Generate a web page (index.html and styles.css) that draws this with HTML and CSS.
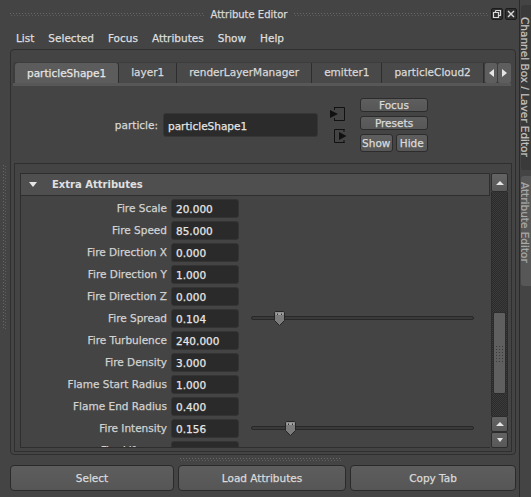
FILE: index.html
```html
<!DOCTYPE html>
<html lang="en">
  <head>
    <meta charset="UTF-8" />
    <title>Attribute Editor</title>
    <link rel="stylesheet" href="styles.css">
  </head>
  <body>
    <div class="app">
      <div class="main">
        <div class="titlebar">
          <span class="grip-h"></span>
          <span class="title">Attribute Editor</span>
          <span class="grip-h"></span>
          <div class="win-btns">
            <span class="win-btn">
              <svg width="10" height="10" viewBox="0 0 10 10">
                <path d="M3.5 1.5 H8.5 V6.5 H6.5 M1.5 3.5 H6.5 V8.5 H1.5 Z M3.5 1.5 V3.5" fill="none" stroke="#d8d8d8" stroke-width="1.2" />
              </svg>
            </span>
            <span class="win-btn">
              <svg width="10" height="10" viewBox="0 0 10 10">
                <path d="M2 2 L8 8 M8 2 L2 8" stroke="#d8d8d8" stroke-width="1.4" />
              </svg>
            </span>
          </div>
        </div>

        <div class="menubar">
          <span>List</span>
          <span>Selected</span>
          <span>Focus</span>
          <span>Attributes</span>
          <span>Show</span>
          <span>Help</span>
        </div>

        <div class="body-row">
          <div class="gutter"><span class="grip-v"></span></div>
          <div class="editor">
            <div class="tabs">
              <span class="tab active">particleShape1</span>
              <span class="tab">layer1</span>
              <span class="tab">renderLayerManager</span>
              <span class="tab">emitter1</span>
              <span class="tab">particleCloud2</span>
              <span class="tab-fill"></span>
              <span class="tab-arrow"><i class="tri-left"></i></span>
              <span class="tab-arrow"><i class="tri-right"></i></span>
            </div>

            <div class="node-row">
              <label class="node-label">particle:</label>
              <div class="node-field">particleShape1</div>
              <svg class="node-icons" width="18" height="38" viewBox="0 0 18 38">
                <path d="M5 1.5 H15.5 V14.5 H5 M5.5 1 V4 M5.5 12 V15" fill="none" stroke="#111" stroke-width="1" />
                <path d="M1 4 L9 8 L1 12 Z" fill="#111" />
                <path d="M15.5 23.5 H5.5 V36.5 H15.5 M15 23 V26 M15 34 V37" fill="none" stroke="#111" stroke-width="1" />
                <path d="M10 26 L17.5 30 L10 34 Z" fill="#111" />
              </svg>
              <div class="node-btns">
                <button class="btn">Focus</button>
                <button class="btn">Presets</button>
                <div class="btn-pair">
                  <button class="btn">Show</button>
                  <button class="btn">Hide</button>
                </div>
              </div>
            </div>

            <div class="section">
              <div class="section-main">
                <div class="section-header">
                  <i class="tri-down"></i>
                  <span>Extra Attributes</span>
                </div>
                <div class="attr-list">
                  <div class="attr-row"><span class="attr-label">Fire Scale</span><span class="attr-field">20.000</span></div>
                  <div class="attr-row"><span class="attr-label">Fire Speed</span><span class="attr-field">85.000</span></div>
                  <div class="attr-row"><span class="attr-label">Fire Direction X</span><span class="attr-field">0.000</span></div>
                  <div class="attr-row"><span class="attr-label">Fire Direction Y</span><span class="attr-field">1.000</span></div>
                  <div class="attr-row"><span class="attr-label">Fire Direction Z</span><span class="attr-field">0.000</span></div>
                  <div class="attr-row">
                    <span class="attr-label">Fire Spread</span><span class="attr-field">0.104</span>
                    <div class="slider">
                      <svg class="handle" style="left: 22px" width="11" height="15" viewBox="0 0 11 15">
                        <path d="M0.5 1.5 L1.5 0.5 H9.5 L10.5 1.5 V9.5 L5.5 14.5 L0.5 9.5 Z" fill="#7c7c7c" stroke="#262626" />
                        <path d="M1.5 1.5 H9.5 V4 H1.5 Z" fill="#a2a2a2" />
                        <rect x="3" y="2.5" width="1" height="1.5" fill="#333" />
                        <rect x="7" y="2.5" width="1" height="1.5" fill="#333" />
                      </svg>
                    </div>
                  </div>
                  <div class="attr-row"><span class="attr-label">Fire Turbulence</span><span class="attr-field">240.000</span></div>
                  <div class="attr-row"><span class="attr-label">Fire Density</span><span class="attr-field">3.000</span></div>
                  <div class="attr-row"><span class="attr-label">Flame Start Radius</span><span class="attr-field">1.000</span></div>
                  <div class="attr-row"><span class="attr-label">Flame End Radius</span><span class="attr-field">0.400</span></div>
                  <div class="attr-row">
                    <span class="attr-label">Fire Intensity</span><span class="attr-field">0.156</span>
                    <div class="slider">
                      <svg class="handle" style="left: 33px" width="11" height="15" viewBox="0 0 11 15">
                        <path d="M0.5 1.5 L1.5 0.5 H9.5 L10.5 1.5 V9.5 L5.5 14.5 L0.5 9.5 Z" fill="#7c7c7c" stroke="#262626" />
                        <path d="M1.5 1.5 H9.5 V4 H1.5 Z" fill="#a2a2a2" />
                        <rect x="3" y="2.5" width="1" height="1.5" fill="#333" />
                        <rect x="7" y="2.5" width="1" height="1.5" fill="#333" />
                      </svg>
                    </div>
                  </div>
                  <div class="attr-row"><span class="attr-label">Fire Lifespan</span><span class="attr-field">0.300</span></div>
                </div>
              </div>

              <div class="scrollbar">
                <span class="sb-btn"><i class="tri-up"></i></span>
                <div class="sb-track">
                  <span class="sb-thumb"><i class="sb-dots"></i></span>
                </div>
                <span class="sb-btn small"><i class="tri-up"></i></span>
                <span class="sb-btn small"><i class="tri-down small"></i></span>
              </div>
            </div>
          </div>
        </div>

        <div class="bottom-grip"><span class="grip-h"></span></div>

        <div class="actions">
          <button class="btn big">Select</button>
          <button class="btn big">Load Attributes</button>
          <button class="btn big">Copy Tab</button>
        </div>
      </div>

      <div class="side">
        <div class="side-tab dark">Channel Box / Layer Editor</div>
        <div class="side-tab light">Attribute Editor</div>
      </div>
    </div>
  </body>
</html>
```

FILE: styles.css
```css
* {
  margin: 0;
  padding: 0;
  box-sizing: border-box;
}

body {
  width: 531px;
  height: 497px;
  overflow: hidden;
  background-color: #444444;
  color: #d6d6d6;
  font-family: "DejaVu Sans", "Liberation Sans", sans-serif;
  font-size: 10.5px;
  -webkit-text-stroke: 0.25px currentColor;
}

.app {
  display: flex;
  height: 497px;
}

.main {
  width: 519px;
  display: flex;
  flex-direction: column;
}

/* title bar */
.titlebar {
  height: 28px;
  display: flex;
  align-items: center;
  padding: 0 2px 0 10px;
}

.grip-h {
  flex: 1;
  height: 3px;
  background-image:
    repeating-linear-gradient(90deg, #686868 0 1px, transparent 1px 3px),
    repeating-linear-gradient(90deg, transparent 0 1px, #5e5e5e 1px 2px, transparent 2px 3px);
  background-size: 100% 1px, 100% 1px;
  background-position: 0 0, 0 2px;
  background-repeat: no-repeat;
}

.title {
  margin: 0 7px;
  font-size: 10px;
  color: #dadada;
}

.win-btns {
  display: flex;
  gap: 2px;
  margin-left: 3px;
}

.win-btn {
  width: 12px;
  height: 12px;
  display: flex;
  align-items: center;
  justify-content: center;
  background-color: #2f2f2f;
  border: 1px solid #1c1c1c;
  border-radius: 2px;
}

/* menu */
.menubar {
  height: 19px;
  display: flex;
  align-items: center;
  gap: 14px;
  padding-left: 16px;
  color: #dedede;
}

/* editor frame */
.body-row {
  display: flex;
  height: 406px;
  margin-top: 2px;
}

.gutter {
  width: 10px;
}

.grip-v {
  display: block;
  width: 3px;
  height: 165px;
  margin: 116px 0 0 3px;
  background-image:
    repeating-linear-gradient(180deg, #686868 0 1px, transparent 1px 3px),
    repeating-linear-gradient(180deg, transparent 0 1px, #5e5e5e 1px 2px, transparent 2px 3px);
  background-size: 1px 100%, 1px 100%;
  background-position: 0 0, 2px 0;
  background-repeat: no-repeat;
}

.editor {
  width: 506px;
  height: 406px;
  border: 1px solid #2f2f2f;
  border-radius: 4px;
}

/* tabs */
.tabs {
  display: flex;
  height: 24px;
  margin: 12px 4px 0 2px;
  padding: 1px 0 0 2px;
  background-color: #3d3d3d;
  border-bottom: 3px solid #575757;
  border-radius: 3px 3px 0 0;
}

.tab {
  padding: 0 12px;
  line-height: 19px;
  background-color: #494949;
  border-right: 1px solid #2e2e2e;
  color: #d8d8d8;
}

.tab.active {
  background-color: #5c5c5c;
  border-radius: 3px 3px 0 0;
  color: #e4e4e4;
  line-height: 20px;
}

.tab-fill {
  flex: 1;
  background-color: #494949;
}

.tab-arrow {
  width: 13px;
  margin-left: 1px;
  display: flex;
  align-items: center;
  justify-content: center;
  background-color: #5e5e5e;
  border-radius: 2px;
}

.tri-left,
.tri-right {
  width: 0;
  height: 0;
  border-top: 4px solid transparent;
  border-bottom: 4px solid transparent;
}

.tri-left {
  border-right: 5px solid #e6e6e6;
}

.tri-right {
  border-left: 5px solid #e6e6e6;
}

/* node row */
.node-row {
  height: 77px;
  display: flex;
  align-items: center;
}

.node-label {
  width: 147px;
  text-align: right;
  color: #d8d8d8;
}

.node-field {
  width: 155px;
  height: 24px;
  margin-left: 5px;
  padding-left: 4px;
  line-height: 24px;
  background-color: #2b2b2b;
  border: 1px solid #363636;
  border-radius: 3px;
  color: #e4e4e4;
}

.node-icons {
  margin-left: 11px;
}

.node-btns {
  margin-left: 13px;
  width: 68px;
  display: flex;
  flex-direction: column;
  gap: 4px;
}

.btn-pair {
  display: flex;
  gap: 3px;
}

.btn {
  height: 18px;
  flex: 1;
  font-family: inherit;
  font-size: 10.5px;
  color: #dadada;
  background: linear-gradient(#5e5e5e, #575757);
  border: 1px solid #2c2c2c;
  border-radius: 3px;
}

/* attribute section */
.section {
  height: 289px;
  margin: 0 3px;
  padding: 9px 3px 3px 5px;
  display: flex;
  gap: 1px;
  border: 1px solid #2f2f2f;
}

.section-main {
  flex: 1;
  display: flex;
  flex-direction: column;
}

.section-header {
  height: 23px;
  display: flex;
  align-items: center;
  padding-left: 8px;
  background-color: #4f4f4f;
  border: 1px solid #2e2e2e;
  font-size: 10px;
  font-weight: bold;
  color: #e0e0e0;
  -webkit-text-stroke: 0;
}

.section-header span {
  margin-left: 15px;
}

.tri-down {
  width: 0;
  height: 0;
  border-left: 4px solid transparent;
  border-right: 4px solid transparent;
  border-top: 5px solid #e6e6e6;
}

.tri-down.small {
  border-left-width: 3px;
  border-right-width: 3px;
  border-top-width: 4px;
}

.tri-up {
  width: 0;
  height: 0;
  border-left: 4px solid transparent;
  border-right: 4px solid transparent;
  border-bottom: 4px solid #e6e6e6;
}

.attr-list {
  flex: 1;
  overflow: hidden;
  border-left: 1px solid #2e2e2e;
  border-bottom: 1px solid #2e2e2e;
  padding-top: 1px;
}

.attr-row {
  height: 22px;
  display: flex;
  align-items: center;
}

.attr-label {
  width: 146px;
  text-align: right;
  color: #d2d2d2;
}

.attr-field {
  width: 68px;
  height: 19px;
  margin-left: 4px;
  padding-left: 4px;
  line-height: 18px;
  background-color: #2a2a2a;
  border: 1px solid #343434;
  border-radius: 3px;
  color: #e6e6e6;
}

.slider {
  position: relative;
  width: 223px;
  height: 4px;
  margin-left: 12px;
  background-color: #3a3a3a;
  border: 1px solid #282828;
  border-radius: 2px;
}

.slider .handle {
  position: absolute;
  top: -6px;
}

/* scrollbar */
.scrollbar {
  width: 17px;
  display: flex;
  flex-direction: column;
}

.sb-btn {
  height: 19px;
  display: flex;
  align-items: center;
  justify-content: center;
  background: linear-gradient(#636363, #585858);
  border: 1px solid #2c2c2c;
  border-radius: 2px;
}

.sb-btn.small {
  height: 16px;
}

.sb-track {
  flex: 1;
  padding: 120px 1px 0;
  background: repeating-conic-gradient(#2b2b2b 0 25%, #3b3b3b 0 50%) 0 0 / 2px 2px;
  border-left: 1px solid #2c2c2c;
  border-right: 1px solid #2c2c2c;
}

.sb-thumb {
  height: 82px;
  display: flex;
  align-items: center;
  justify-content: center;
  background-color: #5f5f5f;
  border: 1px solid #2c2c2c;
  border-radius: 2px;
}

.sb-dots {
  width: 10px;
  height: 17px;
  background-image: radial-gradient(#383838 0.8px, transparent 1px);
  background-size: 3px 3px;
}

/* bottom */
.bottom-grip {
  height: 10px;
  padding: 3px 0 0 180px;
  display: flex;
}

.bottom-grip .grip-h {
  flex: none;
  width: 162px;
}

.actions {
  height: 26px;
  display: grid;
  grid-template-columns: 164px 168px 166px;
  gap: 4px;
  padding-left: 10px;
}

.btn.big {
  height: 26px;
  font-size: 10.5px;
  border-radius: 4px;
  background: linear-gradient(#5d5d5d, #565656);
  border-color: #2a2a2a;
}

/* side tabs */
.side {
  width: 12px;
  display: flex;
  flex-direction: column;
  gap: 6px;
  padding: 5px 0 0 1px;
  border-left: 1px solid #2a2a2a;
}

.side-tab {
  writing-mode: vertical-rl;
  overflow: hidden;
  font-size: 10.5px;
  line-height: 12px;
  padding-left: 1px;
  border-radius: 3px 0 0 3px;
}

.side-tab.dark {
  height: 165px;
  padding-top: 12px;
  background-color: #3a3a3a;
  color: #c2c2c2;
}

.side-tab.light {
  height: 110px;
  padding-top: 6px;
  background-color: #575757;
  color: #a8a8a8;
}
```
